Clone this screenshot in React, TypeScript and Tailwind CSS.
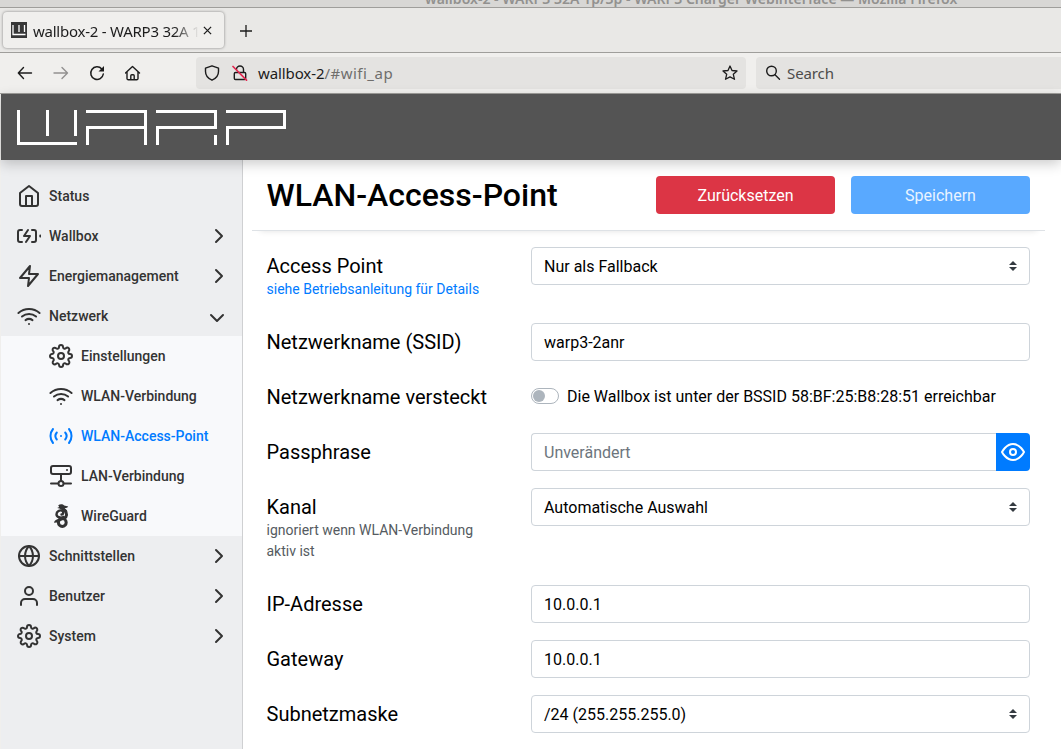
import type { ReactNode } from "react";
import {
  FiChevronDown,
  FiChevronRight,
  FiEye,
  FiGlobe,
  FiHome,
  FiSettings,
  FiUser,
  FiWifi,
  FiZap,
} from "react-icons/fi";

const stroke = {
  fill: "none",
  stroke: "currentColor",
  strokeWidth: 2,
  strokeLinecap: "round" as const,
  strokeLinejoin: "round" as const,
};

function ChargeIcon() {
  return (
    <svg viewBox="0 0 24 24" className="size-6" {...stroke}>
      <path d="M5 6H3a2 2 0 0 0-2 2v8a2 2 0 0 0 2 2h2M15 6h2a2 2 0 0 1 2 2v8a2 2 0 0 1-2 2h-2M11 6l-4 6h6l-4 6M23.3 11.5v1" />
    </svg>
  );
}

function AccessPointIcon() {
  return (
    <svg viewBox="0 0 24 24" className="size-6" {...stroke}>
      <path d="M4 5a11 11 0 0 0 0 14M20 5a11 11 0 0 1 0 14M7.8 8.500a5.500 5.500 0 0 0 0 7M16.2 8.500a5.500 5.500 0 0 1 0 7M12 12h.01" />
    </svg>
  );
}

function LanIcon() {
  return (
    <svg viewBox="0 0 24 24" className="size-6" {...stroke}>
      <rect x="2" y="2" width="20" height="8" rx="2" />
      <path d="M18 6h.01M12 10v7M2 19.5h7M15 19.5h7" />
      <circle cx="12" cy="19.5" r="2.5" />
    </svg>
  );
}

function WireGuardIcon() {
  return (
    <svg viewBox="0 0 24 24" className="size-6" {...stroke}>
      <path
        d="M9.200 1.200c2-1.300 4.800-1.100 6 .4l4 .8c-.5 1.400-2 1.600-3.500 1.700.8 1.200 2.200 1.600 2.800 3.600l-4.200-.8-3.800-2.400-2.300-.6 2-1z"
        fill="currentColor"
        stroke="none"
      />
      <path d="M16 7c2.400 2.200 1.900 5.600-.5 7-2 1.200-5 .8-6.500 3" strokeWidth="3" />
      <path d="M14.500 13c-2.800 1.400-7 .2-7-2.800s3.500-4.500 5.500-3.500 1.500 3.800-.5 3.800" strokeWidth="2.400" />
      <circle cx="13.300" cy="18.500" r="3.900" strokeWidth="3" />
      <path d="M5 18.700c.3-2.200 2-3.500 4.500-3.500l-1.500 3.300z" fill="currentColor" stroke="none" />
    </svg>
  );
}

function Nav({
  icon,
  label,
  sub,
  active,
  arrow,
}: {
  icon: ReactNode;
  label: string;
  sub?: boolean;
  active?: boolean;
  arrow?: "right" | "down";
}) {
  return (
    <a
      className={`flex h-10 items-center gap-2 pr-3 text-sm font-medium ${sub ? "bg-[#f8f9fb] pl-12" : "pl-4"} ${active ? "text-[#007bff]" : "text-[#333333]"}`}
    >
      <span className="flex size-6 shrink-0">{icon}</span>
      <span className="grow">{label}</span>
      {arrow === "right" && <FiChevronRight className="-mr-px size-6" />}
      {arrow === "down" && <FiChevronDown className="mt-1 mr-px size-6" />}
    </a>
  );
}

function Row({ label, hint, link, children }: { label: string; hint?: string; link?: boolean; children: ReactNode }) {
  return (
    <div className="mb-[17px] flex items-start">
      <div className="w-[264.5px] shrink-0 pt-1.5 pr-8 pb-1.5">
        <div className="text-xl leading-[26px]">{label}</div>
        {hint && (
          <div className={`text-sm leading-[21px] ${link ? "text-[#007bff]" : "text-[#555b61]"}`}>{hint}</div>
        )}
      </div>
      <div className="flex w-[499px]">{children}</div>
    </div>
  );
}

function Field({ value }: { value: string }) {
  return (
    <div className="flex h-[38px] grow items-center rounded-sm border border-[#ced4da] bg-white px-3 pt-0.5">
      {value}
    </div>
  );
}

function SelectField({ value }: { value: string }) {
  return (
    <div className="flex h-[38px] grow items-center justify-between rounded-sm border border-[#ced4da] bg-white px-3">
      <span className="pt-0.5">{value}</span>
      <svg viewBox="0 0 4 5" className="h-2.5 w-2">
        <path fill="#343a40" d="M2 0L0 2h4zm0 5L0 3h4z" />
      </svg>
    </div>
  );
}

function BrowserChrome() {
  return (
    <div className="font-['Noto_Sans',sans-serif] text-[#1c1c1c]">
      <div className="flex h-2 items-end overflow-hidden border-b border-[#9f9e9b] bg-[#d8d7d5] pl-[425px] text-[14px] leading-[18px] font-semibold whitespace-nowrap text-[#92918f]">
        <span className="-mb-px tracking-[0.03px]">
          wallbox-2 - WARP3 32A 1p/3p - WARP3 Charger Webinterface — Mozilla Firefox
        </span>
      </div>
      <div className="flex h-[45px] items-center border-b border-[#9f9e9b] bg-[#e9e8e6] pl-[3px]">
        <div className="flex h-9 w-[221px] items-center rounded bg-[#f0efed] pl-2 shadow-[0_0_3px_rgba(0,0,0,0.45)]">
          <svg viewBox="0 0 16 16" className="size-4 shrink-0">
            <path fill="#373737" d="M0 0h16v16H0z" />
            <path d="M2 3v9.500h12.500M8 3v7M13.500 3v7" fill="none" stroke="#fff" strokeWidth="1.300" />
          </svg>
          <span className="mt-0.5 ml-1.5 w-[166px] overflow-hidden bg-linear-to-r from-[#1c1c1c] from-85% to-transparent bg-clip-text text-[15px] tracking-[-0.24px] whitespace-nowrap text-transparent">
            wallbox-2 - WARP3 32A 1p
          </span>
          <svg viewBox="0 0 10 10" className="ml-1 size-[9px] shrink-0" stroke="#1c1c1c" strokeWidth="1.400">
            <path d="M1 1l8 8M9 1L1 9" />
          </svg>
        </div>
        <svg viewBox="0 0 12 12" className="mt-0.5 ml-4 size-3" stroke="#1c1c1c" strokeWidth="1.300">
          <path d="M6 0v12M0 6h12" />
        </svg>
      </div>
      <div className="flex h-[41px] items-center border-b border-[#9f9e9b] bg-[#f0efed] text-[15px]">
        <div className="flex w-[196px] items-center gap-5 pl-[17px]">
          <svg viewBox="0 0 16 16" className="size-4" {...stroke} strokeWidth="1.400">
            <path d="M14.500 8H1.300M6.500 2.500L1.300 8l5.200 5.500" />
          </svg>
          <svg viewBox="0 0 16 16" className="size-4 text-[#929190]" {...stroke} strokeWidth="1.400">
            <path d="M1 8h13.500M9 2.500L14.500 8 9 13.500" />
          </svg>
          <svg viewBox="0 0 16 16" className="size-4" {...stroke} strokeWidth="1.500">
            <path d="M14.300 9A6.300 6.300 0 1 1 12.800 4" />
            <path d="M15 1v5.500H9.500z" fill="currentColor" stroke="none" />
          </svg>
          <svg viewBox="0.5 0 16 16" className="size-4" {...stroke} strokeWidth="1.400">
            <path d="M1 8l7-6.500L15 8M2.500 7v6.500a1.200 1.200 0 0 0 1.200 1.200h8.600a1.200 1.200 0 0 0 1.200-1.200V7M6.300 14.500v-3.700a1 1 0 0 1 1-1h1.400a1 1 0 0 1 1 1v3.700" />
          </svg>
        </div>
        <div className="flex h-8 w-[550px] items-center rounded bg-[#e4e3e1] px-2">
          <svg viewBox="0 0 16 16" className="size-4" {...stroke} strokeWidth="1.400">
            <path d="M8 .8l6.500 2.300v3.400c0 4-2.500 7-6.500 8.700-4-1.700-6.500-4.700-6.500-8.700V3.100z" />
          </svg>
          <svg viewBox="0 0 16 16" className="ml-3 size-4" {...stroke} strokeWidth="1.400">
            <path d="M4.500 4.500a3.500 3.500 0 0 1 7 0V7.500M3.500 7.500h9a1.200 1.200 0 0 1 1.200 1.200v4.600a1.200 1.200 0 0 1-1.200 1.200h-9a1.200 1.200 0 0 1-1.200-1.200V8.700a1.200 1.200 0 0 1 1.200-1.200z" />
            <path d="M1 1.500L14.500 15.200" stroke="#e22850" strokeWidth="1.700" />
          </svg>
          <span className="ml-2.5 grow tracking-[0.5px] text-[#6f6e6c]">
            <span className="tracking-[-0.1px] text-[#1c1c1c]">wallbox-2</span>/#wifi_ap
          </span>
          <svg viewBox="0 0 16 16" className="size-4" {...stroke} strokeWidth="1.300">
            <path d="M8 1l2 4.500 5 .5-3.700 3.300 1.200 5L8 11.900l-4.500 2.400 1.200-5L1 6l5-.5z" />
          </svg>
        </div>
        <div className="ml-2.5 flex h-8 grow items-center rounded-l bg-[#e4e3e1] pl-[9px] text-[#4d4c4a]">
          <svg viewBox="0 0 16 16" className="size-4 text-[#1c1c1c]" {...stroke} strokeWidth="1.400">
            <circle cx="6.500" cy="6" r="4.800" />
            <path d="M10 9.800l4.500 4.500" />
          </svg>
          <span className="ml-1.5 tracking-[-0.1px]">Search</span>
        </div>
      </div>
    </div>
  );
}

export default function App() {
  return (
    <div className="flex h-[749px] w-[1061px] flex-col overflow-hidden bg-white font-[Roboto,sans-serif] text-base text-black">
      <BrowserChrome />
      <div className="flex min-h-0 grow flex-col border-l border-[#f0efed]">
        <header className="z-10 flex h-[66px] shrink-0 items-start bg-[#545454] pt-4 pl-4 shadow-[0_4px_12px_rgba(0,0,0,0.2)]">
          <svg viewBox="17 110 270 35" className="h-[35px] w-[270px]" fill="none" stroke="#fff" strokeWidth="3">
            <path d="M18.500 110v33.500H77M47.500 110v26M75.500 110v26" />
            <path d="M86 111.500h59.500V145M145.500 127.500h-58V145" />
            <path d="M156 111.500h59.500v16h-58V145M215.500 135v10" />
            <path d="M226 111.500h58.500v16h-57V145" />
          </svg>
        </header>
        <div className="flex min-h-0 grow">
          <nav className="w-[242px] shrink-0 border-r border-[#cfd0d2] bg-[#edeef0] pt-4">
            <Nav icon={<FiHome className="size-6" />} label="Status" />
            <Nav icon={<ChargeIcon />} label="Wallbox" arrow="right" />
            <Nav icon={<FiZap className="size-6" />} label="Energiemanagement" arrow="right" />
            <Nav icon={<FiWifi className="size-6" />} label="Netzwerk" arrow="down" />
            <Nav sub icon={<FiSettings className="size-6" />} label="Einstellungen" />
            <Nav sub icon={<FiWifi className="size-6" />} label="WLAN-Verbindung" />
            <Nav sub active icon={<AccessPointIcon />} label="WLAN-Access-Point" />
            <Nav sub icon={<LanIcon />} label="LAN-Verbindung" />
            <Nav sub icon={<WireGuardIcon />} label="WireGuard" />
            <Nav icon={<FiGlobe className="size-6" />} label="Schnittstellen" arrow="right" />
            <Nav icon={<FiUser className="size-6" />} label="Benutzer" arrow="right" />
            <Nav icon={<FiSettings className="size-6" />} label="System" arrow="right" />
          </nav>
          <main className="grow pl-[9px]">
            <div className="flex h-[71px] w-[793px] items-center gap-4 border-b border-[#dee2e6] pr-[15px] pl-[14.5px] shadow-[0_8px_6px_-8px_rgba(0,0,0,0.12)]">
              <h1 className="grow text-[32px] leading-[38px] font-medium">WLAN-Access-Point</h1>
              <button className="h-[38px] w-[179px] rounded-sm bg-[#dc3545] pt-0.5 text-white">Zurücksetzen</button>
              <button className="h-[38px] w-[179px] rounded-sm bg-[#59a9ff] pt-0.5 text-[#eaf4ff]">Speichern</button>
            </div>
            <form className="pt-4 pl-[14.5px]">
              <Row label="Access Point" hint="siehe Betriebsanleitung für Details" link>
                <SelectField value="Nur als Fallback" />
              </Row>
              <Row label="Netzwerkname (SSID)">
                <Field value="warp3-2anr" />
              </Row>
              <Row label="Netzwerkname versteckt">
                <div className="flex h-9 items-center gap-2">
                  <span className="flex h-4 w-7 items-center rounded-full border border-[#adb5bd] bg-white pl-px">
                    <span className="size-3 rounded-full bg-[#adb5bd]" />
                  </span>
                  <span className="pt-0.5">Die Wallbox ist unter der BSSID 58:BF:25:B8:28:51 erreichbar</span>
                </div>
              </Row>
              <Row label="Passphrase">
                <div className="flex h-[38px] w-[465px] items-center rounded-l-sm border border-r-0 border-[#ced4da] px-3 pt-0.5 text-[#6c757d]">
                  Unverändert
                </div>
                <button className="flex h-[38px] w-[34px] items-center justify-center rounded-r-sm bg-[#007bff] text-white">
                  <FiEye className="size-6" />
                </button>
              </Row>
              <Row label="Kanal" hint="ignoriert wenn WLAN-Verbindung aktiv ist">
                <SelectField value="Automatische Auswahl" />
              </Row>
              <Row label="IP-Adresse">
                <Field value="10.0.0.1" />
              </Row>
              <Row label="Gateway">
                <Field value="10.0.0.1" />
              </Row>
              <Row label="Subnetzmaske">
                <SelectField value="/24 (255.255.255.0)" />
              </Row>
            </form>
          </main>
        </div>
      </div>
    </div>
  );
}
